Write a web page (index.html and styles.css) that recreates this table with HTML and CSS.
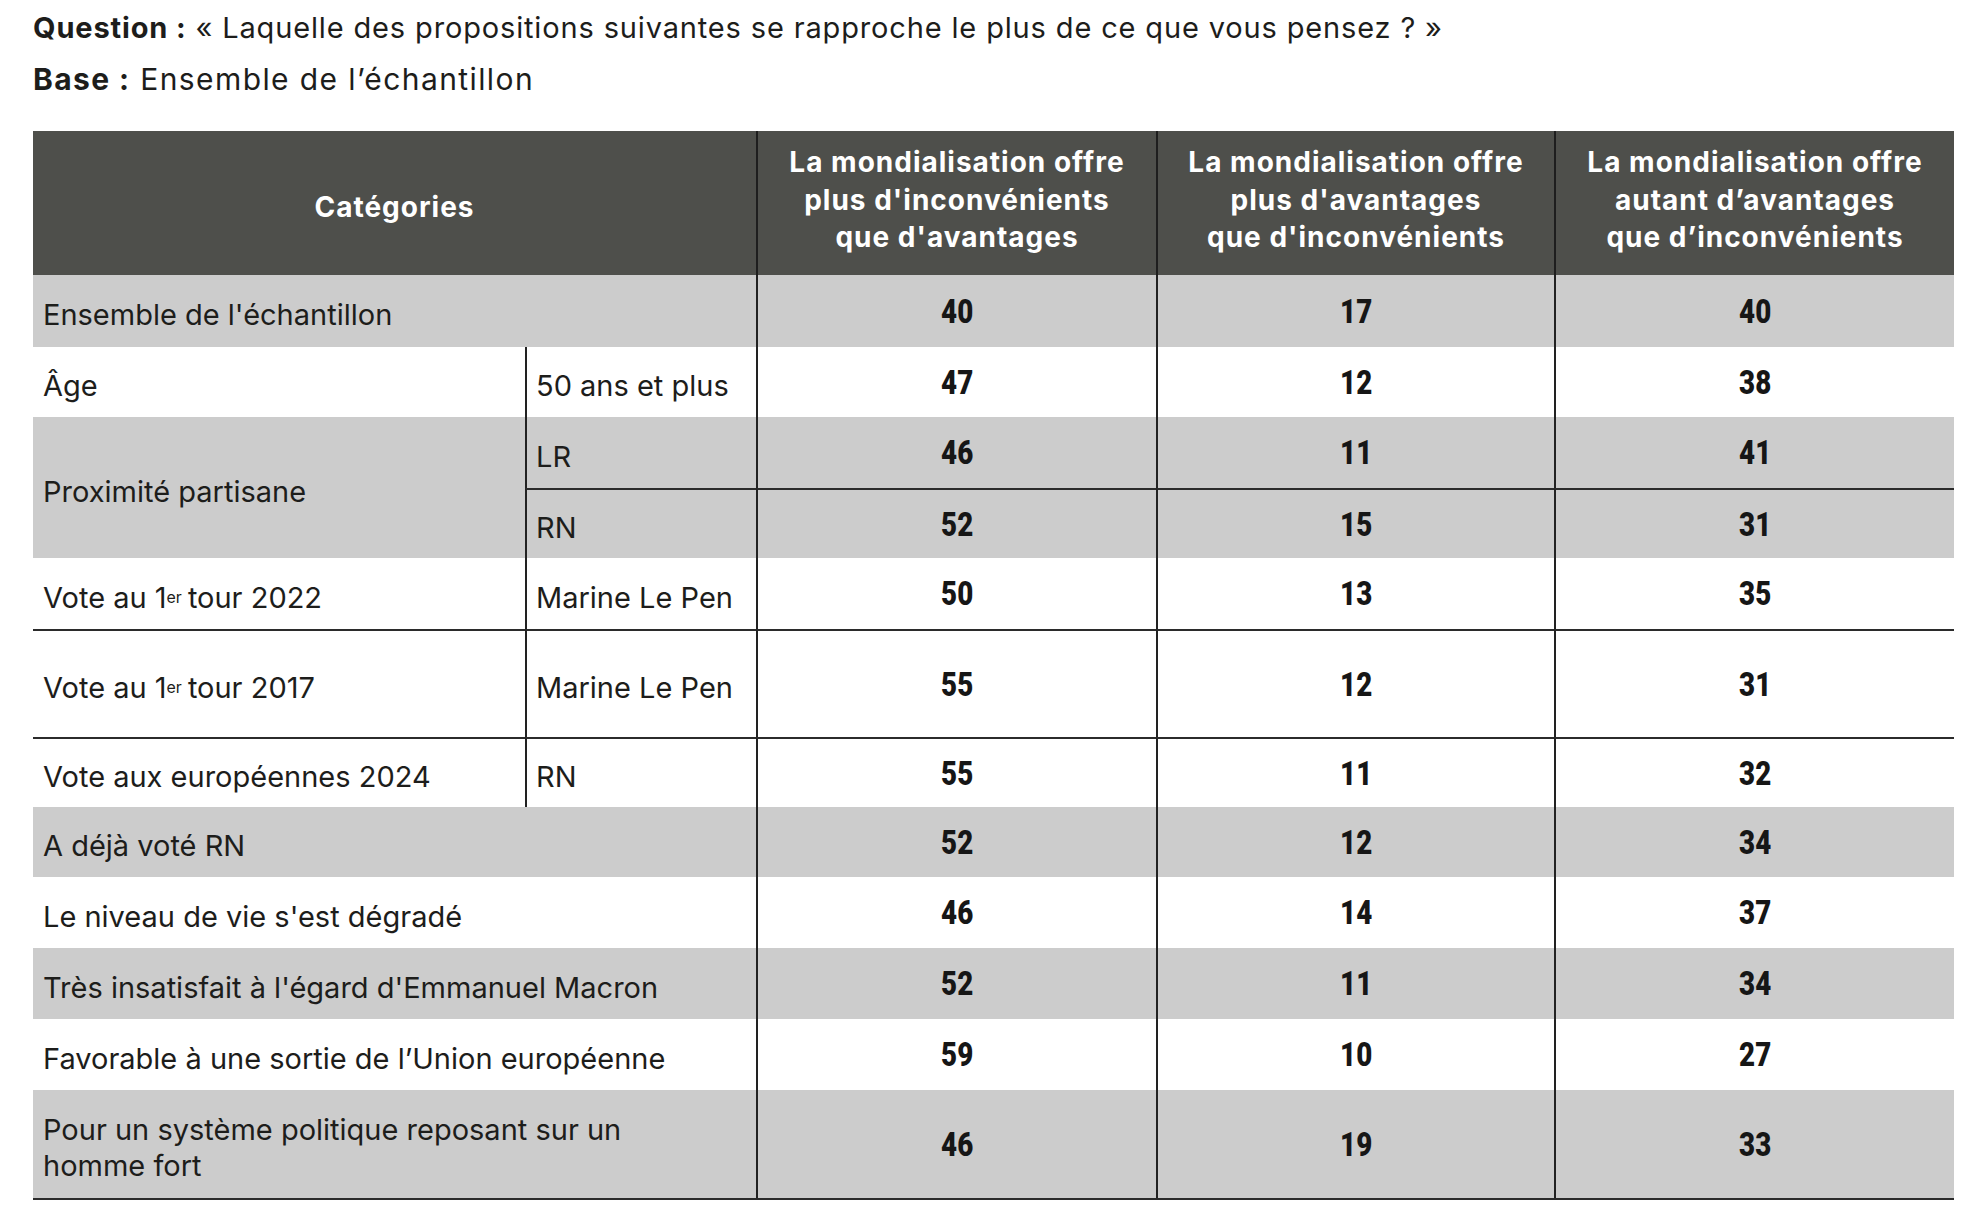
FILE: index.html
```html
<!DOCTYPE html>
<html lang="fr">
<head>
<meta charset="utf-8">
<title>Mondialisation</title>
<link rel="stylesheet" href="styles.css">
</head>
<body>
<div class="page">
  <p class="q"><b>Question :</b> « Laquelle des propositions suivantes se rapproche le plus de ce que vous pensez ? »</p>
  <p class="base"><b>Base :</b> Ensemble de l’échantillon</p>
  <div class="grid">
    <div class="hd cat span2">Catégories</div>
    <div class="hd col">La mondialisation offre<br>plus d'inconvénients<br>que d'avantages</div>
    <div class="hd col">La mondialisation offre<br>plus d'avantages<br>que d'inconvénients</div>
    <div class="hd col">La mondialisation offre<br>autant d’avantages<br>que d’inconvénients</div>

    <div class="lab span2 g">Ensemble de l'échantillon</div>
    <div class="num g"><span>40</span></div><div class="num g"><span>17</span></div><div class="num g"><span>40</span></div>

    <div class="lab">Âge</div>
    <div class="sub">50 ans et plus</div>
    <div class="num"><span>47</span></div><div class="num"><span>12</span></div><div class="num"><span>38</span></div>

    <div class="lab g rspan2">Proximité partisane</div>
    <div class="sub g">LR</div>
    <div class="num g"><span>46</span></div><div class="num g"><span>11</span></div><div class="num g"><span>41</span></div>
    <div class="sub g tl">RN</div>
    <div class="num g tl"><span>52</span></div><div class="num g tl"><span>15</span></div><div class="num g tl"><span>31</span></div>

    <div class="lab">Vote au 1<sup>er</sup> tour 2022</div>
    <div class="sub">Marine Le Pen</div>
    <div class="num"><span>50</span></div><div class="num"><span>13</span></div><div class="num"><span>35</span></div>

    <div class="lab tl">Vote au 1<sup>er</sup> tour 2017</div>
    <div class="sub tl">Marine Le Pen</div>
    <div class="num tl"><span>55</span></div><div class="num tl"><span>12</span></div><div class="num tl"><span>31</span></div>

    <div class="lab tl">Vote aux européennes 2024</div>
    <div class="sub tl">RN</div>
    <div class="num tl"><span>55</span></div><div class="num tl"><span>11</span></div><div class="num tl"><span>32</span></div>

    <div class="lab span2 g">A déjà voté RN</div>
    <div class="num g"><span>52</span></div><div class="num g"><span>12</span></div><div class="num g"><span>34</span></div>

    <div class="lab span2">Le niveau de vie s'est dégradé</div>
    <div class="num"><span>46</span></div><div class="num"><span>14</span></div><div class="num"><span>37</span></div>

    <div class="lab span2 g">Très insatisfait à l'égard d'Emmanuel Macron</div>
    <div class="num g"><span>52</span></div><div class="num g"><span>11</span></div><div class="num g"><span>34</span></div>

    <div class="lab span2">Favorable à une sortie de l’Union européenne</div>
    <div class="num"><span>59</span></div><div class="num"><span>10</span></div><div class="num"><span>27</span></div>

    <div class="lab span2 g">Pour un système politique reposant sur un<br>homme fort</div>
    <div class="num g"><span>46</span></div><div class="num g"><span>19</span></div><div class="num g"><span>33</span></div>
  </div>
</div>
</body>
</html>
```
FILE: styles.css
```css
* { box-sizing: border-box; }

body {
  margin: 0;
  background: #ffffff;
  color: #1d1d1b;
  font-family: Inter, "Noto Sans", sans-serif;
}

.page {
  padding-top: 5px;
  padding-left: 33px;
}

.q,
.base {
  margin: 0;
  line-height: 46px;
  white-space: nowrap;
}

.q {
  font-size: 29px;
  letter-spacing: 0.85px;
}

.base {
  margin-top: 5px;
  font-size: 30px;
  letter-spacing: 1.4px;
}

.q b,
.base b {
  font-weight: 700;
}

.grid {
  margin-top: 29px;
  display: grid;
  width: 1921px;
  grid-template-columns: 492px 231px 400px 398px 400px;
  grid-template-rows: 144px 72px 70px 71px 70px 71px 108px 70px 70px 71px 71px 71px 108px;
  border-bottom: 2px solid #2b2b2b;
}

.span2 { grid-column: span 2; }
.rspan2 { grid-row: span 2; }

.hd {
  background: #4e4f4b;
  color: #ffffff;
  font-weight: 700;
  font-size: 28px;
  letter-spacing: 1px;
  line-height: 37.5px;
  display: flex;
  align-items: center;
  justify-content: center;
  text-align: center;
}

.cat { padding-top: 10px; }

.col {
  border-left: 2px solid #1e1e1e;
  padding-bottom: 5px;
}

.lab,
.sub {
  display: flex;
  align-items: center;
  font-size: 29px;
  line-height: 36px;
  padding: 8px 10px 0;
}

.sub {
  border-left: 2px solid #222222;
  padding-left: 9px;
}

.num {
  display: flex;
  align-items: center;
  justify-content: center;
  border-left: 2px solid #222222;
  font-family: Roboto, "Liberation Sans", sans-serif;
  font-weight: 900;
  font-size: 33px;
  color: #161616;
}

.num span {
  display: inline-block;
  transform: scaleX(0.84);
}

.g { background: #cccccc; }

.tl { border-top: 2px solid #2b2b2b; }

sup {
  font-size: 0.55em;
  line-height: 0;
  vertical-align: 0.6em;
  margin-right: 6px;
}
```
